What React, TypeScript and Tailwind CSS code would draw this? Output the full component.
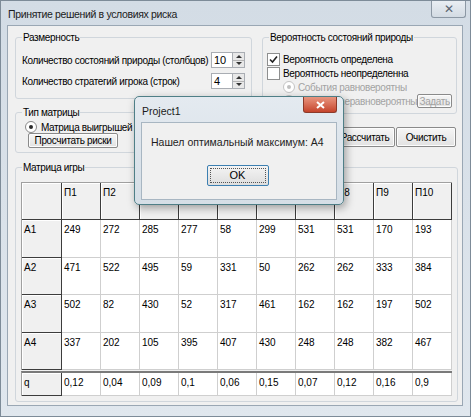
import React from "react";

const rows = [
  { name: "A1", h: "h-[38px]", values: ["249", "272", "285", "277", "58", "299", "531", "531", "170", "193"] },
  { name: "A2", h: "h-[37px]", values: ["471", "522", "495", "59", "331", "50", "262", "262", "333", "384"] },
  { name: "A3", h: "h-[38px]", values: ["502", "82", "430", "52", "317", "461", "162", "162", "197", "502"] },
  { name: "A4", h: "h-[37px]", values: ["337", "202", "105", "395", "407", "430", "248", "248", "382", "467"] },
];

const q = ["0,12", "0,04", "0,09", "0,1", "0,06", "0,15", "0,07", "0,12", "0,16", "0,9"];

const Btn = ({ children, className = "" }: { children: React.ReactNode; className?: string }) => (
  <div
    className={`flex items-center justify-center whitespace-nowrap border border-[#8a8a8a] rounded-[2px] bg-gradient-to-b from-[#f6f6f6] to-[#e2e2e2] shadow-[inset_0_0_0_1px_#fcfcfc] ${className}`}
  >
    {children}
  </div>
);

const Spinner = ({ value }: { value: string }) => (
  <div className="flex h-[16px] w-[34px] shrink-0">
    <div className="flex-1 border border-[#a9adb3] bg-white pl-[2px] text-[11px] leading-[14px] tracking-normal">{value}</div>
    <div className="flex w-[12px] flex-col border border-l-0 border-[#a9adb3] bg-[#e8e8e8]">
      <div className="flex flex-1 items-center justify-center border-b border-[#b5b5b5]">
        <svg width="6" height="3" viewBox="0 0 6 3"><path d="M0 3 L3 0 L6 3 Z" fill="#333" /></svg>
      </div>
      <div className="flex flex-1 items-center justify-center">
        <svg width="6" height="3" viewBox="0 0 6 3"><path d="M0 0 L3 3 L6 0 Z" fill="#333" /></svg>
      </div>
    </div>
  </div>
);

const Check = ({ checked }: { checked?: boolean }) => (
  <div className="flex h-[13px] w-[13px] shrink-0 items-center justify-center border border-[#8e8f8f] bg-white">
    {checked && (
      <svg width="9" height="9" viewBox="0 0 9 9">
        <path d="M1 4.5 L3.5 7 L8 1.5" stroke="#222" strokeWidth="1.6" fill="none" />
      </svg>
    )}
  </div>
);

const Radio = ({ disabled }: { disabled?: boolean }) => (
  <div
    className={`flex h-[12px] w-[12px] shrink-0 items-center justify-center rounded-full border bg-white ${
      disabled ? "border-[#c4c4c4]" : "border-[#8a8a8a]"
    }`}
  >
    <div className={`h-[4px] w-[4px] rounded-full ${disabled ? "bg-[#c0c0c0]" : "bg-[#2a2a2a]"}`} />
  </div>
);

const Group = ({ title, className = "", children }: { title: string; className?: string; children: React.ReactNode }) => (
  <fieldset className={`border border-[#d0d6dc] rounded-[3px] ${className}`}>
    <legend className="ml-[6px] px-[1px] leading-[13px]">{title}</legend>
    {children}
  </fieldset>
);

const cell = "w-[39px] shrink-0 border-b border-r pl-[2px] pt-[3px] leading-[13px] tracking-normal";
const fixed = "border-[#3c3c3c] bg-[#f0f0f0] shadow-[inset_1px_1px_0_#fff]";
const data = "border-[#cfcfcf] bg-white";

export default function App() {
  return (
    <div className="relative h-[417px] w-[471px] overflow-hidden whitespace-nowrap border border-[#7d8b98] bg-gradient-to-b from-[#d3dce5] to-[#e0e7ee] font-['Liberation_Sans',Arial,sans-serif] text-[10px] tracking-[-0.35px] text-black">
      {/* title bar */}
      <div className="flex h-[24px] items-start justify-between pl-[7px] pr-[4px]">
        <span className="mt-[6px] text-[10.5px] leading-[14px] text-[#1b1b1b]">Принятие решений в условиях риска</span>
        <div className="flex h-[17px] w-[35px] items-center justify-center rounded-b-[3px] border border-t-0 border-[#8c98a4] bg-gradient-to-b from-[#e9eef3] to-[#d3dbe3] text-[12px] leading-none text-[#5a6570]">
          ✕
        </div>
      </div>

      {/* client area */}
      <div className="ml-[6px] h-[381px] w-[456px] border border-[#9aa7b4] bg-[#f0f0f0]">
        <div className="flex h-[127px] pl-[7px]">
          <div className="flex w-[237px] flex-col pt-[5px]">
            <Group title="Размерность" className="h-[68px]">
              <div className="flex flex-col gap-[5px] px-[6px] pt-[8px]">
                <div className="flex items-center justify-between">
                  <span>Количество состояний природы (столбцов)</span>
                  <Spinner value="10" />
                </div>
                <div className="flex items-center justify-between">
                  <span>Количество стратегий игрока (строк)</span>
                  <Spinner value="4" />
                </div>
              </div>
            </Group>
            <Group title="Тип матрицы" className="mt-[7px] h-[47px]">
              <div className="flex h-[14px] items-center gap-[4px] pl-[9px] pt-[2px]">
                <Radio />
                <span>Матрица выигрышей</span>
              </div>
              <Btn className="ml-[12px] h-[15px] w-[90px]">Просчитать риски</Btn>
            </Group>
          </div>

          <div className="ml-[10px] flex w-[195px] flex-col pt-[5px]">
            <Group title="Вероятность состояний природы" className="h-[83px]">
              <div className="flex flex-col pl-[4px] pr-[4px] pt-[8px]">
                <div className="flex h-[14px] items-center gap-[3px]">
                  <Check checked />
                  <span>Вероятность определена</span>
                </div>
                <div className="flex h-[14px] items-center gap-[3px]">
                  <Check />
                  <span>Вероятность неопределенна</span>
                </div>
                <div className="flex h-[14px] items-center gap-[3px] pl-[16px] text-[#a3a3a3]">
                  <Radio disabled />
                  <span>События равновероятны</span>
                </div>
                <div className="flex h-[14px] items-center justify-between pl-[16px] text-[#a3a3a3]">
                  <div className="flex items-center gap-[3px]">
                    <Radio disabled />
                    <span>События неравновероятны</span>
                  </div>
                  <Btn className="h-[14px] w-[35px] text-[#a3a3a3]">Задать</Btn>
                </div>
              </div>
            </Group>
            <div className="mt-[13px] flex justify-end gap-[1px] pr-[1px]">
              <Btn className="h-[20px] w-[60px]">Рассчитать</Btn>
              <Btn className="h-[20px] w-[60px]">Очистить</Btn>
            </div>
          </div>
        </div>

        <Group title="Матрица игры" className="ml-[7px] mt-[8px] h-[241px] w-[443px]">
          <div className="ml-[5px] mt-[8px] w-[431px] overflow-hidden">
            <div className="border-l border-t border-[#a0a0a0]">
              <div className="flex h-[37px]">
                <div className={`${cell} ${fixed} w-[40px]`} />
                {q.map((_, i) => (
                  <div key={i} className={`${cell} ${fixed}`}>
                    П{i + 1}
                  </div>
                ))}
              </div>
              {rows.map((r) => (
                <div key={r.name} className={`flex ${r.h}`}>
                  <div className={`${cell} ${fixed} w-[40px]`}>{r.name}</div>
                  {r.values.map((v, i) => (
                    <div key={i} className={`${cell} ${data}`}>
                      {v}
                    </div>
                  ))}
                </div>
              ))}
            </div>
            <div className="mt-[1px] border-l border-t-2 border-[#7a7a7a] border-l-[#a0a0a0]">
              <div className="flex h-[23px]">
                <div className={`${cell} ${fixed} w-[40px]`}>q</div>
                {q.map((v, i) => (
                  <div key={i} className={`${cell} ${data}`}>
                    {v}
                  </div>
                ))}
              </div>
            </div>
          </div>
        </Group>
      </div>

      {/* message dialog */}
      <div className="absolute left-[133px] top-[95px] flex h-[109px] w-[210px] flex-col rounded-[5px] border border-[#4f7f87] bg-gradient-to-b from-[#e4eaf0] to-[#d5dee6] tracking-normal shadow-[2px_3px_8px_rgba(0,0,0,0.35)]">
        <div className="flex h-[25px] items-start justify-between pl-[7px] pr-[6px]">
          <span className="mt-[7px] text-[10.5px] leading-[14px] text-[#1b1b1b]">Project1</span>
          <div className="flex h-[16px] w-[34px] items-center justify-center rounded-b-[3px] border border-t-0 border-[#8c3a2a] bg-gradient-to-b from-[#e8957f] to-[#c5432b]">
            <svg width="9" height="8" viewBox="0 0 9 8">
              <path d="M1 1 L8 7 M8 1 L1 7" stroke="#fff" strokeWidth="2" />
            </svg>
          </div>
        </div>
        <div className="mx-[6px] flex h-[78px] flex-col border border-[#a8b6c2] bg-[#f0f0f0]">
          <div className="pl-[9px] pt-[12px] text-[10.5px] leading-[15px] text-[#1e1e1e]">Нашел оптимальный максимум: A4</div>
          <div className="mt-[15px] flex justify-center pr-[3px]">
            <div className="flex h-[21px] w-[62px] items-center justify-center rounded-[2px] border border-[#3c7fb1] bg-gradient-to-b from-[#f4f4f4] to-[#dedede] p-[2px]">
              <div className="flex h-full w-full items-center justify-center border border-dotted border-[#555] text-[11px]">OK</div>
            </div>
          </div>
        </div>
      </div>
    </div>
  );
}
